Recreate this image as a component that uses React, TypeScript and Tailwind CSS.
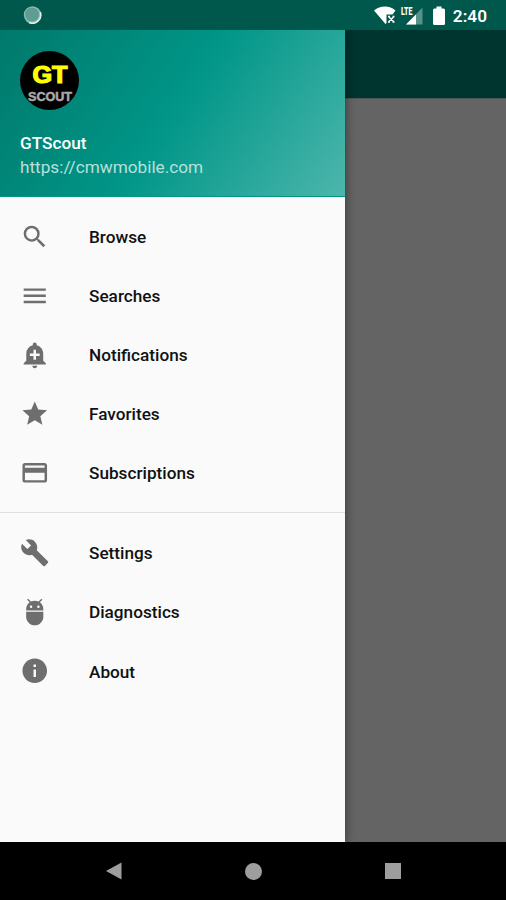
import { MdAdb, MdAddAlert, MdBuild, MdCreditCard, MdInfo, MdMenu, MdSearch, MdStar } from 'react-icons/md'

const mainItems = [
	{ label: 'Browse', icon: MdSearch },
	{ label: 'Searches', icon: MdMenu },
	{ label: 'Notifications', icon: MdAddAlert },
	{ label: 'Favorites', icon: MdStar },
	{ label: 'Subscriptions', icon: MdCreditCard }
]

const otherItems = [
	{ label: 'Settings', icon: MdBuild },
	{ label: 'Diagnostics', icon: MdAdb },
	{ label: 'About', icon: MdInfo }
]

const StatusBar = () => (
	<header className="relative z-20 h-[30px] shrink-0 flex items-center justify-between bg-[#00574b] pl-[23px] pr-[18px] text-white">
		<svg width="19" height="18" viewBox="0 0 19 18">
			<circle cx="9.500" cy="9" r="8.700" fill="#8fbcb5" />
			<path d="M17.300 6A8.400 8.400 0 0 1 6 16.500" fill="none" stroke="#e0efec" strokeWidth="1.500" />
			<circle cx="9" cy="8.500" r="7" fill="#5f9c93" />
		</svg>
		<div className="flex items-center">
			<svg width="78" height="22" viewBox="0 0 78 22" fill="#fff">
				{/* wifi without connection */}
				<path d="M0 6.500C6 1 16 1 21.500 6.500L18.500 10.500H12.500V19L11.500 20Z" />
				<path d="M14.500 12.500L20 18M20 12.500L14.500 18M14 12.500H16M18.500 12.500H20.500M14 18H16M18.500 18H20.500" stroke="#fff" strokeWidth="1.500" />
				{/* mobile signal */}
				<path d="M48.500 3.500V20.500H32Z" fillOpacity="0.350" />
				<path d="M42 10.500V20.500H32Z" />
				<text x="27" y="11" fontSize="10.500" fontWeight="900" fontFamily="Roboto, sans-serif" textLength="11.500" lengthAdjust="spacingAndGlyphs">LTE</text>
				{/* battery */}
				<path d="M62.500 2.500h5v2h2q1.500 0 1.500 1.500v13.500q0 1.500-1.500 1.500h-9q-1.500 0-1.500-1.500v-13.500q0-1.500 1.500-1.500h2z" />
			</svg>
			<span className="ml-[1px] mr-[1px] mt-[2px] text-[17.200px] leading-5 font-semibold">2:40</span>
		</div>
	</header>
)

const Logo = () => (
	<svg className="block" width="60" height="60" viewBox="0 0 60 60" fontFamily="'Liberation Sans', sans-serif" fontWeight="700">
		<circle cx="29.500" cy="29.500" r="29.500" fill="#000" />
		<text x="12.500" y="31.500" fontSize="23" fill="#ff0" stroke="#ff0" strokeWidth="1.200" textLength="35" lengthAdjust="spacingAndGlyphs">GT</text>
		<text x="8" y="49.500" fontSize="12" fill="#aaa" stroke="#aaa" strokeWidth="0.500" textLength="44" lengthAdjust="spacingAndGlyphs">SCOUT</text>
	</svg>
)

const MenuItem = (props: any) => {
	const { label, icon: Icon } = props

	return (
		<li className="h-[59.100px] flex items-center pl-5">
			<Icon className="size-[29.500px] text-[#6e6e6e]" />
			<span className="ml-[39.500px] mt-[2.500px] text-[17.200px] font-medium text-[#111]">{label}</span>
		</li>
	)
}

const Drawer = () => (
	<aside className="w-[345px] shrink-0 bg-[#fafafa] shadow-[2px_0_8px_rgba(0,0,0,0.35)]">
		<div className="h-[167px] pl-5 pt-[21px] border-b border-[#009580] bg-[linear-gradient(124deg,#00796b_0%,#009688_50%,#4db6ac_100%)]">
			<Logo />
			<p className="mt-5 text-[17.200px] leading-6 font-medium text-white">GTScout</p>
			<p className="text-[17.200px] leading-6 text-[#b8e0db]">https://cmwmobile.com</p>
		</div>
		<ul className="pt-[10px]">
			{mainItems.map(item => <MenuItem key={item.label} {...item} />)}
		</ul>
		<ul className="mt-[10px] pt-[10px] border-t border-[#dedede]">
			{otherItems.map(item => <MenuItem key={item.label} {...item} />)}
		</ul>
	</aside>
)

const NavigationBar = () => (
	<footer className="h-[58px] shrink-0 flex items-center justify-between bg-black px-[105px] text-[#9e9e9e]">
		<svg width="17" height="18" viewBox="0 0 17 18" fill="currentColor">
			<path d="M1 9L16.500 0.500V17.500Z" />
		</svg>
		<span className="size-[17px] rounded-full bg-current" />
		<span className="size-4 bg-current" />
	</footer>
)

export default function App() {
	return (
		<div className="w-[506px] h-[900px] flex flex-col overflow-hidden font-[Roboto,sans-serif]">
			<StatusBar />
			<div className="flex-1 min-h-0 flex bg-[#646464]">
				<div className="flex z-10">
					<Drawer />
				</div>
				<div className="flex-1">
					<div className="h-[69px] bg-[#00342f] border-b border-[#4c5554]" />
				</div>
			</div>
			<div className="z-20">
				<NavigationBar />
			</div>
		</div>
	)
}
